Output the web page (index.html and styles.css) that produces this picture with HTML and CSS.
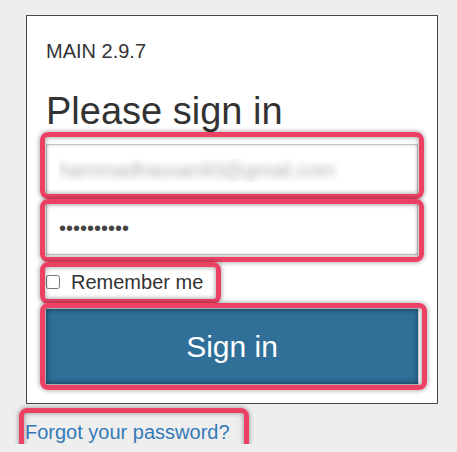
FILE: index.html
```html
<!DOCTYPE HTML>
<html lang="en">
<head>
    <meta charset="utf-8">
    <title>Sign in</title>
    <link rel="stylesheet" href="styles.css">
</head>
<body id="page">
    <div class="login">
        <div class="login__version">MAIN 2.9.7</div>
        <h2 class="login__title">Please sign in</h2>
        <form name="login" class="login__form">
            <div class="mark mark--email">
                <input class="field field--email" type="email" name="email" value="hammadhassan93@gmail.com">
            </div>
            <div class="mark mark--password">
                <input class="field field--password" type="password" name="password" value="xxxxxxxxxx">
            </div>
            <div class="login__remember">
                <label class="mark mark--remember">
                    <input class="login__check" type="checkbox" name="remember">
                    <span>Remember me</span>
                </label>
            </div>
            <div class="mark mark--submit">
                <button class="login__submit" type="submit">Sign in</button>
            </div>
        </form>
    </div>
    <div class="forgot">
        <a class="mark mark--forgot" href="#">Forgot your password?</a>
    </div>
</body>
</html>
```

FILE: styles.css
```css
/* Colours */
:root {
    --page-bg: rgb(238, 238, 238);
    --white: rgb(255, 255, 255);
    --text: rgb(51, 51, 51);
    --card-border: rgb(72, 72, 72);
    --field-border: rgb(196, 196, 196);
    --primary: rgb(47, 111, 152);
    --link: rgb(51, 122, 183);
    --mark: rgb(236, 65, 101);
}

html, body {
    margin: 0;
    padding: 0;
}

body {
    background-color: var(--page-bg);
    font-family: "Liberation Sans", Arial, sans-serif;
    color: var(--text);
}

.login {
    box-sizing: border-box;
    width: 412px;
    margin: 15px 0 0 26px;
    padding: 23px 19px 18px 19px;
    background-color: var(--white);
    border: 1px solid var(--card-border);
}

.login__version {
    font-size: 20px;
    line-height: 24px;
}

.login__title {
    margin: 26px 0 0 0;
    font-size: 38px;
    line-height: 44px;
    font-weight: normal;
}

.login__form {
    margin: 11px 0 0 0;
}

.field {
    display: block;
    box-sizing: border-box;
    width: 100%;
    margin: 0;
    padding: 0 12px;
    font-family: inherit;
    font-size: 20px;
    color: var(--text);
    background-color: var(--white);
    border: 1px solid var(--field-border);
    border-radius: 0;
    box-shadow: inset 0 1px 3px rgba(0, 0, 0, 0.12);
    outline: none;
}

/* email is blurred out in the capture */
.field--email {
    height: 52px;
    color: transparent;
    text-shadow: 0 0 7px rgba(0, 0, 0, 0.3);
}

.field--password {
    height: 53px;
    margin-top: 6px;
    color: rgb(68, 68, 68);
}

.login__remember {
    margin-top: 15px;
    font-size: 20px;
    line-height: 24px;
}

.login__remember label {
    display: inline-flex;
    align-items: center;
}

.login__check {
    width: 14px;
    height: 14px;
    margin: 0 11px 0 0;
}

.mark--submit {
    margin: 14px -1px 0 -1px;
}

.login__submit {
    display: block;
    width: 100%;
    height: 77px;
    margin: 0;
    font-family: inherit;
    font-size: 30px;
    color: var(--white);
    background-color: var(--primary);
    border: 1px solid rgb(205, 212, 218);
    box-shadow: inset 0 0 6px rgba(0, 0, 0, 0.35);
    cursor: pointer;
}

.forgot {
    margin: 16px 0 0 25px;
    font-size: 20px;
    line-height: 24px;
}

.forgot a {
    display: inline-block;
    color: var(--link);
    text-decoration: none;
}

/* Red review marks drawn over the controls */
.mark {
    position: relative;
}

.mark::after {
    content: '';
    position: absolute;
    border: 5px solid var(--mark);
    border-radius: 8px;
    box-shadow: 0 0 4px 1px rgba(0, 0, 0, 0.3), inset 0 0 4px 1px rgba(0, 0, 0, 0.3);
    pointer-events: none;
}

.mark--email::after {
    inset: -12px -6px -3px -6px;
}

.mark--password::after {
    inset: -3px -6px -7px -6px;
}

.mark--remember::after {
    inset: -8px -18px -10px -6px;
}

.mark--submit::after {
    inset: -5px -8px -5px -5px;
}

.mark--forgot::after {
    inset: -12px -19px -10px -6px;
}
```
